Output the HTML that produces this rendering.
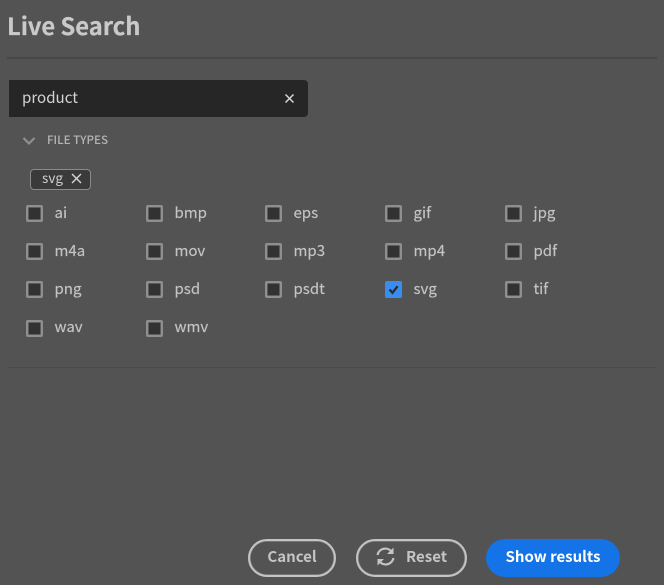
<!DOCTYPE html>
<html><head><meta charset="utf-8">
<style>
html,body{margin:0;padding:0;width:664px;height:585px;overflow:hidden;background:#535353}
body{position:relative;font-family:"Noto Sans CJK SC","Liberation Sans",sans-serif;color:#c8c8c8}
.a{position:absolute;white-space:nowrap}
.cb{position:absolute;box-sizing:border-box;width:17px;height:17px;border:2px solid #8f8f8f;background:#323232;border-radius:2px;box-shadow:inset 0 0 0 .6px #7a7a7a}
.l{position:absolute;font-size:15px;line-height:20px;white-space:nowrap;color:#c4c4c4;margin:0 0 0 -.5px;-webkit-text-stroke:.15px #c4c4c4}
.btn{position:absolute;box-sizing:border-box;height:38px;top:539px;border-radius:19px;border:2px solid #c4c4c4;font-size:15px;font-weight:700;line-height:32px;color:#c4c4c4;text-align:center;box-shadow:inset 0 0 0 .5px #9a9a9a}
</style></head><body>
<div class="a" style="left:7px;top:8px;font-size:23.7px;line-height:34px;font-weight:700;color:#c9c9c9;-webkit-text-stroke:.25px #c9c9c9">Live Search</div>
<div class="a" style="left:7px;top:57px;width:650px;height:2px;background:#474747"></div>
<div class="a" style="left:9px;top:80px;width:299px;height:37px;background:#262626;border-radius:0 4px 4px 0"></div>
<div class="a" style="left:22px;top:85px;font-size:15.1px;line-height:24px;color:#d4d4d4">product</div>
<svg class="a" style="left:284px;top:93px" width="11" height="11" viewBox="0 0 11 11"><path d="M1.5 1.5L9.5 9.5M9.5 1.5L1.5 9.5" stroke="#d8d8d8" stroke-width="1.5" fill="none"/></svg>
<svg class="a" style="left:22px;top:136px" width="14" height="10" viewBox="0 0 14 10"><path d="M1.5 2L7 7.5L12.5 2" stroke="#8f8f8f" stroke-width="2.2" fill="none"/></svg>
<div class="a" style="left:47px;top:131px;font-size:11.6px;line-height:18px;font-weight:500;color:#b4b4b4">FILE TYPES</div>
<div class="a" style="left:30px;top:169px;width:59px;height:19px;border:1px solid #8a8a8a;border-radius:4px;background:#3a3a3a"></div>
<div class="a" style="left:42px;top:167px;font-size:13.5px;line-height:20px;color:#d0d0d0">svg</div>
<svg class="a" style="left:71px;top:173px" width="11" height="11" viewBox="0 0 11 11"><path d="M1 1L10 10M10 1L1 10" stroke="#d8d8d8" stroke-width="1.4" fill="none"/></svg>

<div class="cb" style="left:26px;top:205px"></div><div class="l" style="left:55px;top:203px">ai</div>
<div class="cb" style="left:146px;top:205px"></div><div class="l" style="left:175px;top:203px">bmp</div>
<div class="cb" style="left:265px;top:205px"></div><div class="l" style="left:294px;top:203px">eps</div>
<div class="cb" style="left:385px;top:205px"></div><div class="l" style="left:414px;top:203px">gif</div>
<div class="cb" style="left:505px;top:205px"></div><div class="l" style="left:534px;top:203px">jpg</div>

<div class="cb" style="left:26px;top:243px"></div><div class="l" style="left:55px;top:241px">m4a</div>
<div class="cb" style="left:146px;top:243px"></div><div class="l" style="left:175px;top:241px">mov</div>
<div class="cb" style="left:265px;top:243px"></div><div class="l" style="left:294px;top:241px">mp3</div>
<div class="cb" style="left:385px;top:243px"></div><div class="l" style="left:414px;top:241px">mp4</div>
<div class="cb" style="left:505px;top:243px"></div><div class="l" style="left:534px;top:241px">pdf</div>

<div class="cb" style="left:26px;top:281px"></div><div class="l" style="left:55px;top:279px">png</div>
<div class="cb" style="left:146px;top:281px"></div><div class="l" style="left:175px;top:279px">psd</div>
<div class="cb" style="left:265px;top:281px"></div><div class="l" style="left:294px;top:279px">psdt</div>
<div class="cb" style="left:385px;top:281px;background:#378ef0;border-color:#378ef0;box-shadow:none"></div>
<svg class="a" style="left:385px;top:281px" width="17" height="17" viewBox="0 0 17 17"><path d="M4.5 8.5L7.5 11.8L12.6 5.2" stroke="#2c2c2c" stroke-width="2.4" fill="none"/></svg>
<div class="l" style="left:414px;top:279px">svg</div>
<div class="cb" style="left:505px;top:281px"></div><div class="l" style="left:534px;top:279px">tif</div>

<div class="cb" style="left:26px;top:320px"></div><div class="l" style="left:55px;top:317px">wav</div>
<div class="cb" style="left:146px;top:320px"></div><div class="l" style="left:175px;top:317px">wmv</div>

<div class="a" style="left:7px;top:367px;width:650px;height:1px;background:#4b4b4b"></div>

<div class="btn" style="left:248px;width:88px">Cancel</div>
<div class="btn" style="left:356px;width:111px;text-align:left;padding-left:48px">Reset</div>
<svg class="a" style="left:375px;top:546px" width="21" height="21" viewBox="0 0 21 21"><path d="M2.5 9A8 8 0 0 1 16.5 5.5M18.5 12A8 8 0 0 1 4.5 15.5" stroke="#c4c4c4" stroke-width="2.2" fill="none"/><path d="M18.5 1.5V8H12ZM2.5 19.5V13H9Z" fill="#c4c4c4"/></svg>
<div class="btn" style="left:486px;width:134px;background:#1473e6;border:none;color:#fff;line-height:36px;box-shadow:none">Show results</div>
</body></html>
